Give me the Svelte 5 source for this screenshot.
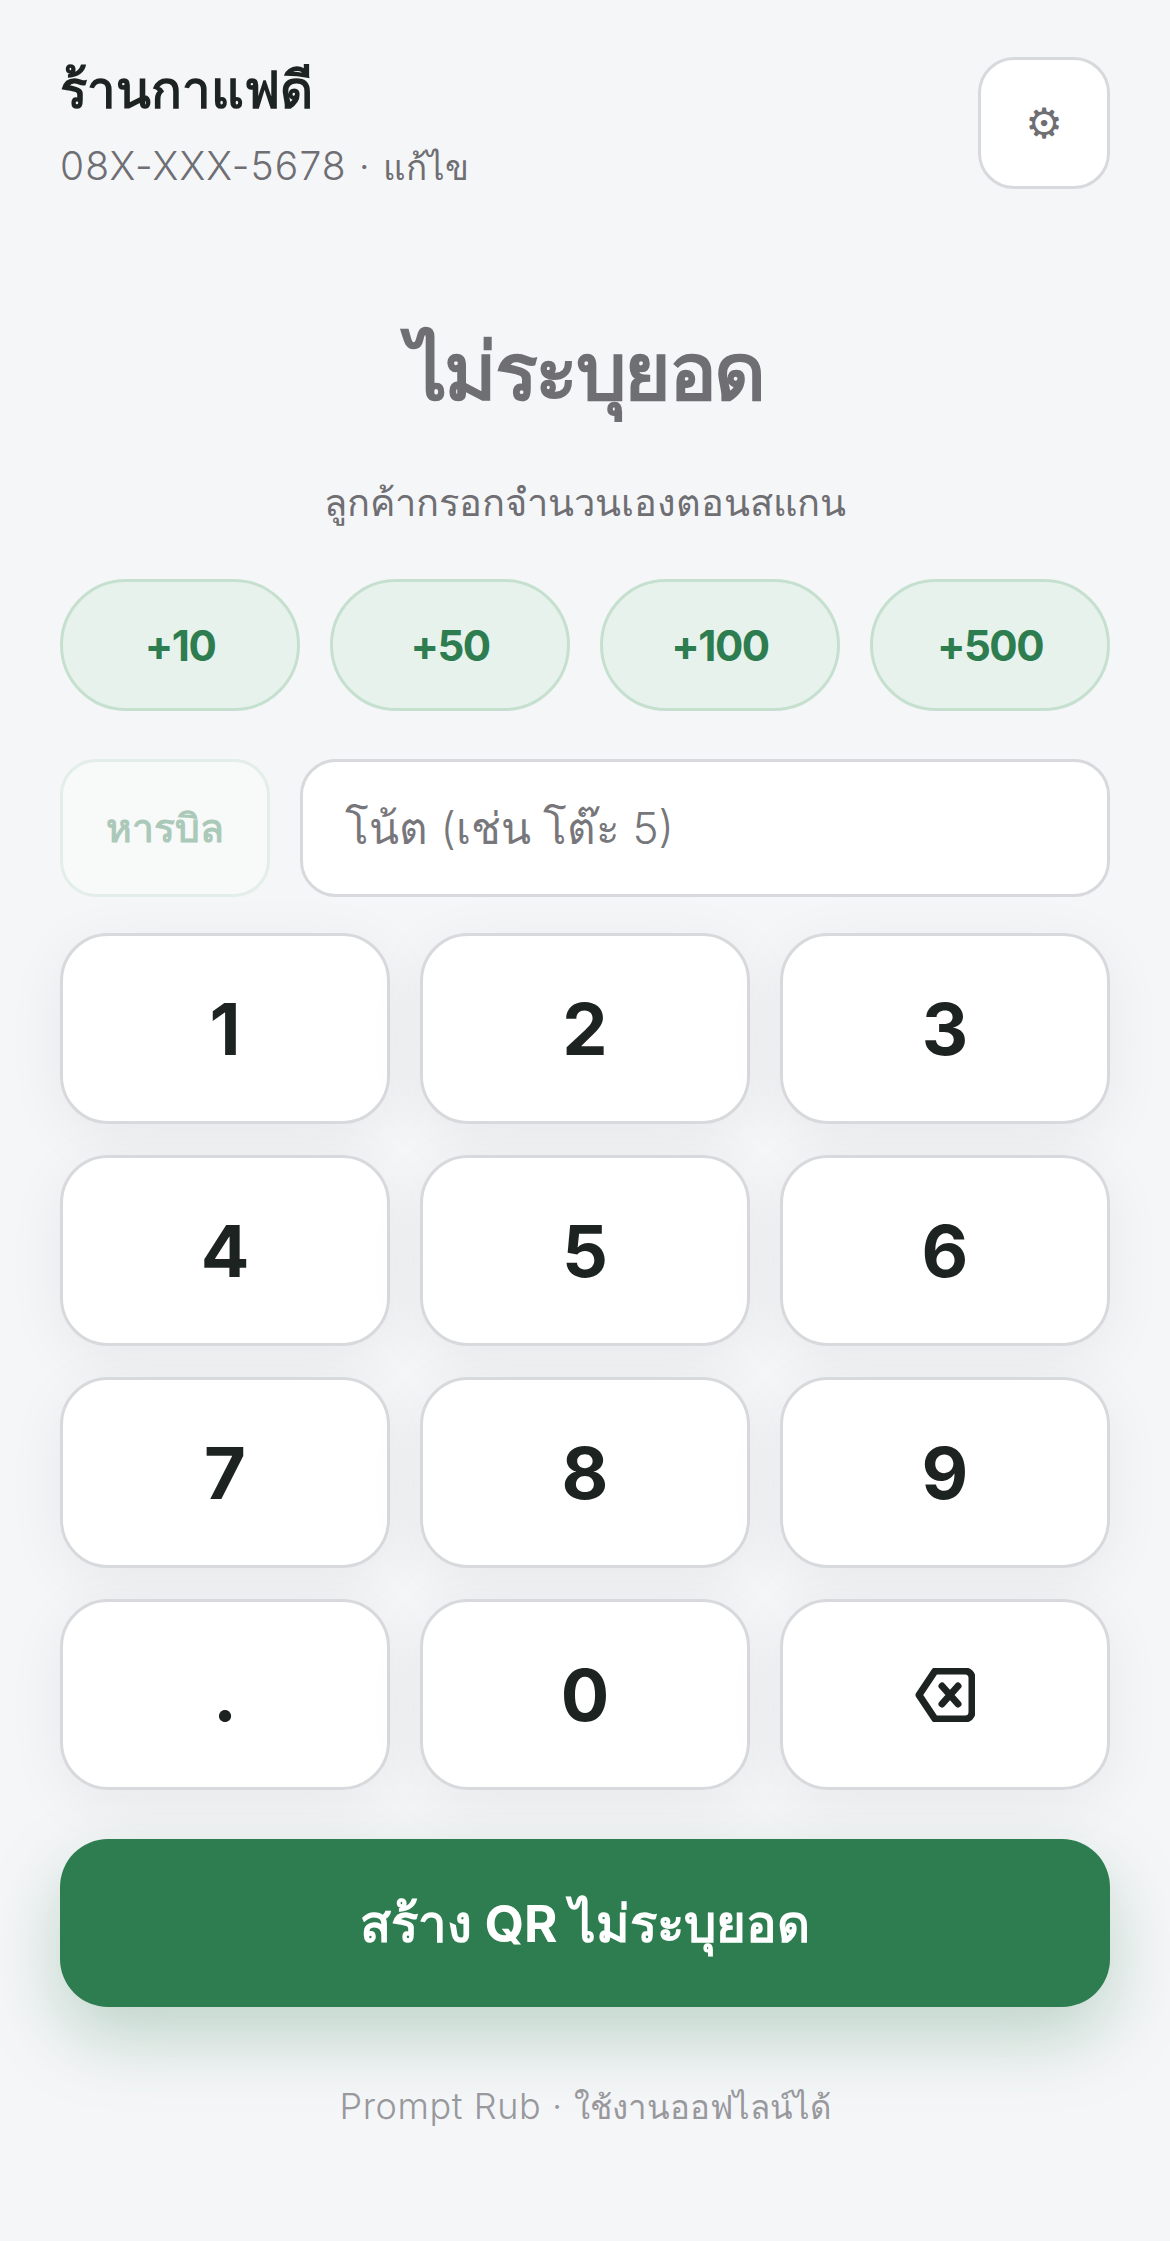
<script>
  const chips = ["+10", "+50", "+100", "+500"];
  const keys = ["1", "2", "3", "4", "5", "6", "7", "8", "9", ".", "0", "back"];
</script>

<main class="page">
  <header class="top">
    <div class="shop">
      <div class="shop-name">ร้านกาแฟดี</div>
      <div class="shop-phone">08X-XXX-5678 · <span class="thai">แก้ไข</span></div>
    </div>
    <button class="settings">⚙</button>
  </header>

  <section class="amount">
    <div class="amount-value">ไม่ระบุยอด</div>
    <div class="amount-hint">ลูกค้ากรอกจำนวนเองตอนสแกน</div>
  </section>

  <div class="chips">
    {#each chips as chip}
      <button class="chip">{chip}</button>
    {/each}
  </div>

  <div class="note-row">
    <button class="split">หารบิล</button>
    <input class="note" placeholder="โน้ต (เช่น โต๊ะ 5)" />
  </div>

  <div class="keypad">
    {#each keys as key}
      <button class="key">
        {#if key === "back"}
          <svg viewBox="0 0 60 54" width="60" height="54" aria-hidden="true">
            <path d="M20 3H50a7 7 0 0 1 7 7V44a7 7 0 0 1-7 7H20L4 27Z" />
            <path d="M27 18L43 36M43 18L27 36" />
          </svg>
        {:else}
          {key}
        {/if}
      </button>
    {/each}
  </div>

  <button class="cta">สร้าง QR ไม่ระบุยอด</button>

  <footer class="foot">Prompt Rub · <span class="thai">ใช้งานออฟไลน์ได้</span></footer>
</main>

<style>
  :global(body) {
    background: #f5f6f8;
  }

  .page {
    box-sizing: border-box;
    width: 1170px;
    height: 2241px;
    padding: 57px 60px 0;
    display: flex;
    flex-direction: column;
    font-family: Inter, "Noto Sans", sans-serif;
    color: #1c2321;
  }

  button {
    font-family: inherit;
    padding: 0;
  }

  .top {
    display: flex;
    justify-content: space-between;
    align-items: flex-start;
  }

  .shop-name {
    font-size: 51px;
    font-weight: 700;
    line-height: 66px;
  }

  .shop-phone {
    margin-top: 16px;
    font-size: 39px;
    font-weight: 300;
    letter-spacing: 1.1px;
    line-height: 54px;
    color: #6e6e73;
  }

  .shop-phone .thai {
    font-size: 35px;
    letter-spacing: 0;
  }

  .settings {
    width: 132px;
    height: 132px;
    border: 3px solid #d8d9dc;
    border-radius: 36px;
    background: #fff;
    color: #6e6e73;
    font-size: 42px;
    font-family: "DejaVu Sans", sans-serif;
  }

  .amount {
    margin-top: 129px;
    text-align: center;
  }

  .amount-value {
    font-size: 80px;
    font-weight: 900;
    letter-spacing: -2.5px;
    line-height: 96px;
    color: #6e6e73;
  }

  .amount-hint {
    margin-top: 56px;
    font-size: 38px;
    font-weight: 300;
    line-height: 54px;
    color: #6e6e73;
  }

  .chips {
    margin-top: 50px;
    display: grid;
    grid-template-columns: repeat(4, 1fr);
    gap: 30px;
  }

  .chip {
    height: 132px;
    border: 3px solid #c6e0d0;
    border-radius: 66px;
    background: #e8f2ec;
    color: #2e7d50;
    font-size: 42px;
    font-weight: 700;
    letter-spacing: -1.5px;
  }

  .note-row {
    margin-top: 48px;
    display: flex;
    gap: 30px;
  }

  .split {
    width: 210px;
    height: 138px;
    border: 3px solid #e3eee8;
    border-radius: 36px;
    background: #f8f9f9;
    color: #abc9b8;
    font-size: 39px;
    font-weight: 700;
  }

  .note {
    flex: 1;
    min-width: 0;
    box-sizing: border-box;
    height: 138px;
    padding: 0 42px;
    border: 3px solid #d8d9dc;
    border-radius: 36px;
    background: #fff;
    font-family: inherit;
    font-size: 44px;
    font-weight: 300;
    outline: none;
  }

  .note::placeholder {
    color: #77777b;
  }

  .keypad {
    margin-top: 36px;
    display: grid;
    grid-template-columns: repeat(3, 1fr);
    grid-auto-rows: 191px;
    gap: 31px 30px;
  }

  .key {
    border: 3px solid #d8d9dc;
    border-radius: 48px;
    background: #fff;
    color: #1c2321;
    font-size: 72px;
    font-weight: 700;
    box-shadow: 0 12px 60px rgba(0, 0, 0, 0.06);
  }

  .key svg {
    display: block;
    margin: 0 auto;
    fill: none;
    stroke: #1c2321;
    stroke-width: 7;
    stroke-linecap: round;
    stroke-linejoin: round;
  }

  .cta {
    margin-top: 49px;
    height: 168px;
    flex: none;
    border: none;
    border-radius: 48px;
    background: #2e7d50;
    color: #fff;
    font-size: 51px;
    font-weight: 700;
    box-shadow: 0 30px 72px rgba(46, 125, 80, 0.28);
  }

  .foot {
    margin-top: 72px;
    text-align: center;
    font-size: 36px;
    font-weight: 300;
    letter-spacing: 0.6px;
    line-height: 54px;
    color: #98989d;
  }

  .foot .thai {
    font-size: 33px;
    letter-spacing: 0;
  }
</style>
